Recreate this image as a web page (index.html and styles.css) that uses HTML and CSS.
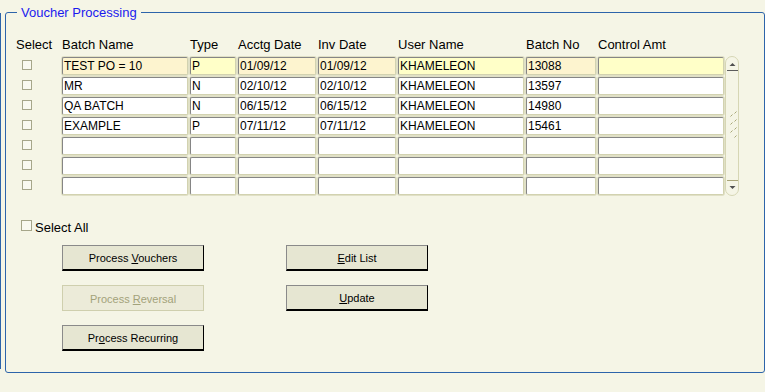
FILE: index.html
```html
<!DOCTYPE html>
<html>
<head>
<meta charset="utf-8">
<link rel="stylesheet" href="styles.css">
</head>
<body>
<div class="window">
  <div class="edge"></div>
  <div class="frame">
    <div class="frame-title">Voucher Processing</div>
    <div class="table">
      <div class="hd hd-sel">Select</div>
      <div class="hd">Batch Name</div>
      <div class="hd">Type</div>
      <div class="hd">Acctg Date</div>
      <div class="hd">Inv Date</div>
      <div class="hd">User Name</div>
      <div class="hd">Batch No</div>
      <div class="hd">Control Amt</div>
      <div class="hd"></div>

      <div class="sel"><span class="cb"></span></div>
      <div class="fld cur-ro">TEST PO = 10</div>
      <div class="fld cur">P</div>
      <div class="fld cur-ro">01/09/12</div>
      <div class="fld cur-ro">01/09/12</div>
      <div class="fld cur">KHAMELEON</div>
      <div class="fld cur-ro">13088</div>
      <div class="fld cur"></div>
      <div class="scroll">
        <svg width="14" height="140" viewBox="0 0 14 140">
          <rect x="0.5" y="0.5" width="13" height="139" rx="6.5" ry="6.5" fill="#f5f5e6" stroke="#d6d6b4"/>
          <polygon points="4.5,10 7.5,7 10.5,10" fill="#505050"/>
          <line x1="2" y1="14.5" x2="13" y2="14.5" stroke="#5c5c5c"/>
          <line x1="2" y1="124.5" x2="13" y2="124.5" stroke="#a8a478"/>
          <polygon points="4.5,130 10.5,130 7.5,133" fill="#505050"/>
          <g stroke="#a8a878" stroke-width="1">
            <line x1="9.5" y1="57.5" x2="11.5" y2="55.5"/>
            <line x1="5.5" y1="60.5" x2="7.5" y2="58.5"/>
            <line x1="9.5" y1="65.5" x2="11.5" y2="63.5"/>
            <line x1="5.5" y1="68.5" x2="7.5" y2="66.5"/>
            <line x1="9.5" y1="73.5" x2="11.5" y2="71.5"/>
            <line x1="5.5" y1="76.5" x2="7.5" y2="74.5"/>
            <line x1="9.5" y1="81.5" x2="11.5" y2="79.5"/>
          </g>
        </svg>
      </div>

      <div class="sel"><span class="cb"></span></div>
      <div class="fld">MR</div>
      <div class="fld">N</div>
      <div class="fld">02/10/12</div>
      <div class="fld">02/10/12</div>
      <div class="fld">KHAMELEON</div>
      <div class="fld">13597</div>
      <div class="fld"></div>

      <div class="sel"><span class="cb"></span></div>
      <div class="fld">QA BATCH</div>
      <div class="fld">N</div>
      <div class="fld">06/15/12</div>
      <div class="fld">06/15/12</div>
      <div class="fld">KHAMELEON</div>
      <div class="fld">14980</div>
      <div class="fld"></div>

      <div class="sel"><span class="cb"></span></div>
      <div class="fld">EXAMPLE</div>
      <div class="fld">P</div>
      <div class="fld">07/11/12</div>
      <div class="fld">07/11/12</div>
      <div class="fld">KHAMELEON</div>
      <div class="fld">15461</div>
      <div class="fld"></div>

      <div class="sel"><span class="cb"></span></div>
      <div class="fld"></div>
      <div class="fld"></div>
      <div class="fld"></div>
      <div class="fld"></div>
      <div class="fld"></div>
      <div class="fld"></div>
      <div class="fld"></div>

      <div class="sel"><span class="cb"></span></div>
      <div class="fld"></div>
      <div class="fld"></div>
      <div class="fld"></div>
      <div class="fld"></div>
      <div class="fld"></div>
      <div class="fld"></div>
      <div class="fld"></div>

      <div class="sel"><span class="cb"></span></div>
      <div class="fld"></div>
      <div class="fld"></div>
      <div class="fld"></div>
      <div class="fld"></div>
      <div class="fld"></div>
      <div class="fld"></div>
      <div class="fld"></div>
    </div>

    <div class="select-all"><span class="cb"></span><span class="sa-label">Select All</span></div>

    <div class="buttons">
      <div class="btn"><span>Process <u>V</u>ouchers</span></div>
      <div class="btn"><span><u>E</u>dit List</span></div>
      <div class="btn disabled"><span>Process <u>R</u>eversal</span></div>
      <div class="btn"><span><u>U</u>pdate</span></div>
      <div class="btn"><span>Pr<u>o</u>cess Recurring</span></div>
    </div>
  </div>
</div>
</body>
</html>
```

FILE: styles.css
```css
html, body {
  margin: 0;
  padding: 0;
  background: #f5f5e6;
  font-family: "Liberation Sans", Arial, sans-serif;
  color: #000;
}

.window {
  display: flex;
  align-items: flex-start;
  width: 765px;
  height: 392px;
}

.edge {
  width: 1px;
  height: 356px;
  margin-top: 13px;
  background: #2d64aa;
  flex: none;
}

.frame {
  position: relative;
  box-sizing: border-box;
  margin-top: 12px;
  margin-left: 4px;
  width: 760px;
  height: 361px;
  border: 1px solid #2d64aa;
  border-radius: 3px;
  padding-top: 24px;
}

.frame-title {
  position: absolute;
  top: -8px;
  left: 11px;
  padding: 0 4px;
  background: #f5f5e6;
  color: #1a1aee;
  font-size: 13px;
  line-height: 15px;
}

.table {
  display: grid;
  grid-template-columns: 54px 126px 46px 78px 78px 126px 70px 126px 13px;
  grid-template-rows: 18px repeat(7, 18px);
  column-gap: 2px;
  row-gap: 2px;
}

.hd {
  font-size: 13px;
  line-height: 15px;
  white-space: nowrap;
}

.hd-sel {
  padding-left: 10px;
}

.sel {
  padding-left: 16px;
  padding-top: 3px;
}

.cb {
  display: block;
  box-sizing: border-box;
  width: 10px;
  height: 10px;
  border: 1px solid #a6a68a;
  background: #f9f9f0;
}

.fld {
  box-sizing: border-box;
  height: 18px;
  border: 1px solid;
  border-color: #858585 #d2d2b0 #d2d2b0 #858585;
  border-radius: 2px;
  box-shadow: 0 0 0 1px #e0e0c6;
  background: #ffffff;
  font-size: 12px;
  line-height: 15px;
  padding: 1px 0 0 1px;
  white-space: nowrap;
  overflow: hidden;
}

.fld.cur-ro {
  background: #fdf4cf;
}

.fld.cur {
  background: #ffffc8;
}

.scroll {
  grid-column: 9;
  grid-row: 2 / span 7;
  margin: -1px 0 -1px -1px;
  width: 14px;
  height: 140px;
}

.scroll svg {
  display: block;
}

.select-all {
  display: flex;
  align-items: flex-start;
  margin-top: 25px;
  margin-left: 15px;
  height: 15px;
}

.sa-label {
  margin-left: 3px;
  font-size: 13px;
  line-height: 15px;
}

.select-all .cb {
  width: 11px;
  height: 11px;
}

.buttons {
  display: grid;
  grid-template-columns: 142px 142px;
  grid-auto-rows: 26px;
  column-gap: 82px;
  row-gap: 14px;
  margin-top: 10px;
  margin-left: 56px;
}

.btn {
  box-sizing: border-box;
  display: flex;
  align-items: center;
  justify-content: center;
  border: 1px solid;
  border-color: #8a8a8a #000 #000 #8a8a8a;
  border-bottom-width: 2px;
  background: #e6e6d2;
  font-size: 11px;
  padding-top: 1px;
  white-space: nowrap;
}

.btn u {
  text-underline-offset: 1px;
}

.btn.disabled {
  border-color: #cfcfae;
  border-bottom-width: 1px;
  background: #ecebd9;
  color: #a3a27a;
}
```
